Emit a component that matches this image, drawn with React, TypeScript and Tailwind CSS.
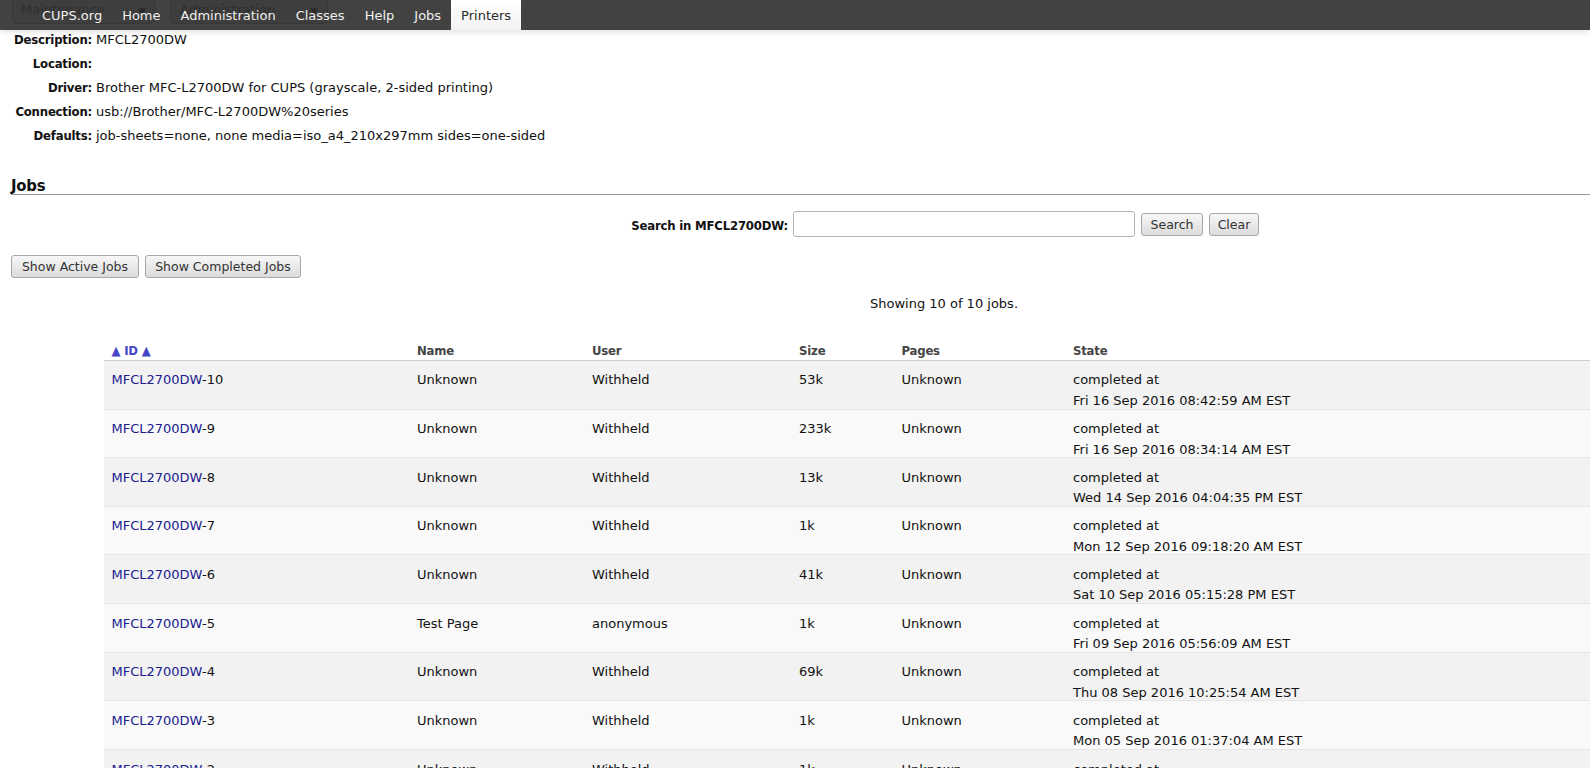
import React from "react";

type Job = {
  id: number;
  name: string;
  user: string;
  size: string;
  pages: string;
  when: string;
};

const jobs: Job[] = [
  { id: 10, name: "Unknown", user: "Withheld", size: "53k", pages: "Unknown", when: "Fri 16 Sep 2016 08:42:59 AM EST" },
  { id: 9, name: "Unknown", user: "Withheld", size: "233k", pages: "Unknown", when: "Fri 16 Sep 2016 08:34:14 AM EST" },
  { id: 8, name: "Unknown", user: "Withheld", size: "13k", pages: "Unknown", when: "Wed 14 Sep 2016 04:04:35 PM EST" },
  { id: 7, name: "Unknown", user: "Withheld", size: "1k", pages: "Unknown", when: "Mon 12 Sep 2016 09:18:20 AM EST" },
  { id: 6, name: "Unknown", user: "Withheld", size: "41k", pages: "Unknown", when: "Sat 10 Sep 2016 05:15:28 PM EST" },
  { id: 5, name: "Test Page", user: "anonymous", size: "1k", pages: "Unknown", when: "Fri 09 Sep 2016 05:56:09 AM EST" },
  { id: 4, name: "Unknown", user: "Withheld", size: "69k", pages: "Unknown", when: "Thu 08 Sep 2016 10:25:54 AM EST" },
  { id: 3, name: "Unknown", user: "Withheld", size: "1k", pages: "Unknown", when: "Mon 05 Sep 2016 01:37:04 AM EST" },
  { id: 2, name: "Unknown", user: "Withheld", size: "1k", pages: "Unknown", when: "Sun 04 Sep 2016 11:12:40 AM EST" },
  { id: 1, name: "Unknown", user: "Withheld", size: "1k", pages: "Unknown", when: "Sat 03 Sep 2016 09:02:17 AM EST" },
];

const navItems = ["CUPS.org", "Home", "Administration", "Classes", "Help", "Jobs"];

const details: [string, string][] = [
  ["Description:", "MFCL2700DW"],
  ["Location:", ""],
  ["Driver:", "Brother MFC-L2700DW for CUPS (grayscale, 2-sided printing)"],
  ["Connection:", "usb://Brother/MFC-L2700DW%20series"],
  ["Defaults:", "job-sheets=none, none media=iso_a4_210x297mm sides=one-sided"],
];

const btn =
  "h-[23px] rounded-[3px] border border-[#a8a8a8] bg-linear-to-b from-[#f7f7f7] to-[#dcdcdc] text-[12.5px] leading-[21px] text-[#333] font-['DejaVu_Sans',sans-serif]";

const bold = "font-['DejaVu_Sans_Condensed','DejaVu_Sans',sans-serif] font-bold tracking-[-0.2px]";

export default function App() {
  return (
    <div className="relative h-[768px] w-[1590px] overflow-hidden bg-white text-[13px] text-[#111] font-['DejaVu_Sans',sans-serif]">
      {/* Nav bar */}
      <nav className="relative z-10 flex h-[30px] bg-[#424242] pl-[32px] shadow-[0_2px_6px_rgba(0,0,0,0.12)]">
        <div className="absolute left-[12px] top-[-6px] flex h-[30px] w-[143px] items-end justify-between rounded-[5px] border border-[#383838] bg-[#3e3e3e] px-[8px] pb-[4px] text-[13px] text-[#2f2f2f]">
          <span>Maintenance</span>
          <span className="text-[10px] text-[#2a2a2a]">▼</span>
        </div>
        <div className="absolute left-[170px] top-[-6px] flex h-[30px] w-[158px] items-end justify-between rounded-[5px] border border-[#383838] bg-[#3e3e3e] px-[9px] pb-[4px] text-[13px] text-[#2f2f2f]">
          <span>Administration</span>
          <span className="text-[10px] text-[#2a2a2a]">▼</span>
        </div>
        {navItems.map((n) => (
          <span key={n} className="relative px-[10px] leading-[31px] text-[#f0f0f0]">
            {n}
          </span>
        ))}
        <span className="relative bg-linear-to-b from-white to-[#f2f2f2] px-[10px] leading-[31px] text-[#2a2a2a]">
          Printers
        </span>
      </nav>

      {/* Printer details */}
      <div className="mt-[-1.6px] grid grid-cols-[92px_1fr]">
        {details.map(([k, v]) => (
          <React.Fragment key={k}>
            <div className={`h-[24px] text-right leading-[24px] ${bold}`}>{k}</div>
            <div className="h-[24px] pl-[4px] leading-[24px]">{v}</div>
          </React.Fragment>
        ))}
      </div>

      {/* Jobs heading */}
      <div className={`ml-[11px] mt-[26px] h-[21px] border-b border-[#9a9a9a] text-[16.5px] leading-[24px] ${bold}`}>
        Jobs
      </div>

      {/* Search */}
      <div className="mt-[15px] flex h-[27px] items-center">
        <div className={`w-[788px] shrink-0 pt-[3px] text-right ${bold}`}>Search in MFCL2700DW:</div>
        <input
          className="ml-[5px] h-[26px] w-[342px] rounded-[3px] border border-[#b5b5b5] bg-white"
          type="text"
        />
        <button className={`${btn} ml-[6px] mt-[2px] w-[62px]`}>Search</button>
        <button className={`${btn} ml-[6px] mt-[2px] w-[50px]`}>Clear</button>
      </div>

      {/* Show buttons */}
      <div className="ml-[11px] mt-[17.5px] flex gap-[6px]">
        <button className={`${btn} w-[128px]`}>Show Active Jobs</button>
        <button className={`${btn} w-[156px]`}>Show Completed Jobs</button>
      </div>

      <div className="ml-[298px] mt-[16px] h-[20px] text-center leading-[20px]">Showing 10 of 10 jobs.</div>

      {/* Table */}
      <div className="ml-[103.5px] mt-[26px]">
        <div className={`flex h-[21px] border-b border-[#cccccc] pt-[1px] leading-[20px] text-[#444] ${bold}`}>
          <div className="w-[305.5px] shrink-0 pl-[8px] text-[#4545c8]">▲ ID ▲</div>
          <div className="w-[175px] shrink-0 pl-[8px]">Name</div>
          <div className="w-[207px] shrink-0 pl-[8px]">User</div>
          <div className="w-[102.5px] shrink-0 pl-[8px]">Size</div>
          <div className="w-[171.5px] shrink-0 pl-[8px]">Pages</div>
          <div className="flex-1 pl-[8px]">State</div>
        </div>
        {jobs.map((j, i) => (
          <div
            key={j.id}
            className={`flex h-[48.65px] border-b border-[#e6e6e6] pt-[9.5px] leading-[20.5px] ${
              i % 2 === 0 ? "bg-[#f2f2f2]" : "bg-[#f9f9f9]"
            }`}
          >
            <div className="w-[305.5px] shrink-0 pl-[8px]">
              <span className="text-[#20208f]">MFCL2700DW</span>-{j.id}
            </div>
            <div className="w-[175px] shrink-0 pl-[8px]">{j.name}</div>
            <div className="w-[207px] shrink-0 pl-[8px]">{j.user}</div>
            <div className="w-[102.5px] shrink-0 pl-[8px]">{j.size}</div>
            <div className="w-[171.5px] shrink-0 pl-[8px]">{j.pages}</div>
            <div className="flex-1 pl-[8px]">
              <div>completed at</div>
              <div>{j.when}</div>
            </div>
          </div>
        ))}
      </div>
    </div>
  );
}
